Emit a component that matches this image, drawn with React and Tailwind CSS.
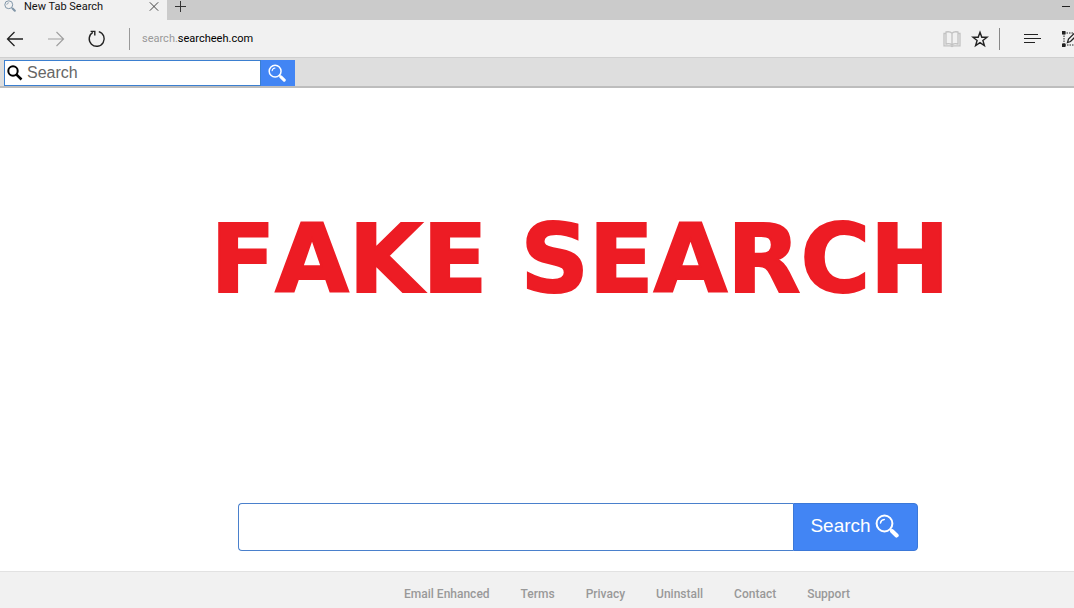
import React, { useState } from 'react';

const footerLinks = ['Email Enhanced', 'Terms', 'Privacy', 'Uninstall', 'Contact', 'Support'];

function Magnifier({ className }) {
    return (
        <svg viewBox="0 0 24 24" fill="none" className={className} aria-hidden="true">
            <circle cx="9.5" cy="9.5" r="7.9" stroke="currentColor" strokeWidth="2" />
            <path d="M5.5 9a4.2 4.2 0 0 1 3.8-3.6" stroke="currentColor" strokeWidth="1.5" strokeLinecap="round" />
            <path d="M14.8 14.8l2 2" stroke="currentColor" strokeWidth="1.8" />
            <path d="M17.2 17.2l4.4 4.2" stroke="currentColor" strokeWidth="4.2" strokeLinecap="round" />
        </svg>
    );
}

function TabStrip() {
    return (
        <div className="flex h-5 bg-[#cbcbcb] text-[#111]">
            <div className="flex w-[167px] shrink-0 items-start bg-[#f1f1f1] pl-1 pr-2">
                <Magnifier className="h-3 w-3 text-[#8196a8]" />
                <span className="flex-1 pl-2 font-['Roboto',sans-serif] text-[11px] leading-[14px]">New Tab Search</span>
                <button type="button" aria-label="Close tab" className="pt-0.5">
                    <svg viewBox="0 0 10 10" className="h-[10px] w-[10px]" stroke="#444" fill="none">
                        <path d="M0.8 0.3l8.4 8.4M9.2 0.3L0.8 8.7" />
                    </svg>
                </button>
            </div>
            <button type="button" aria-label="New tab" className="flex items-start pl-2 pt-px">
                <svg viewBox="0 0 12 12" className="h-3 w-3" stroke="#333" fill="none">
                    <path d="M5.5 0v11M0 5.5h11" />
                </svg>
            </button>
            <button type="button" aria-label="Minimize" className="ml-auto flex items-start pr-1 pt-1.5">
                <span className="block h-px w-2 bg-[#222]" />
            </button>
        </div>
    );
}

function AddressBar() {
    return (
        <div className="flex h-[38px] items-center overflow-hidden border-b border-[#d0d0d0] bg-[#f1f1f1] pl-1.5">
            <button type="button" aria-label="Back">
                <svg viewBox="0 0 18 16" className="h-4 w-[18px]" stroke="#222" strokeWidth="1.3" fill="none">
                    <path d="M17 8H1.5M8.5 1L1.5 8l7 7" />
                </svg>
            </button>
            <button type="button" aria-label="Forward" className="ml-6">
                <svg viewBox="0 0 18 16" className="h-4 w-[18px]" stroke="#a0a0a0" strokeWidth="1.2" fill="none">
                    <path d="M0 8h15.5M8.5 1l7 7-7 7" />
                </svg>
            </button>
            <button type="button" aria-label="Refresh" className="ml-5">
                <svg viewBox="0 0 20 18" className="h-[18px] w-5" stroke="#222" strokeWidth="1.4" fill="none">
                    <path d="M12.8 1.6A7.500 7.500 0 1 1 6.800 2.400" />
                    <path d="M4.600 1.400h4.200v4" />
                </svg>
            </button>
            <span className="ml-[23px] h-[22px] w-px bg-[#999]" />
            <div className="ml-3 flex-1 font-['Roboto',sans-serif] text-[11px] leading-4 text-[#999]">
                search.<span className="text-black">searcheeh.com</span>
            </div>
            <button type="button" aria-label="Reading view">
                <svg viewBox="0 0 18 18" className="h-[18px] w-[18px]" stroke="#c2c2c2" strokeWidth="1.3" fill="none">
                    <path d="M9 3.2C7.5 1.6 5 1.6 3 2v12c2-.5 4.500-.4 6 1 1.500-1.400 4-1.500 6-1V2c-2-.4-4.500-.4-6 1.200zM9 3v12M3 3.500H1v12.300h6.500L9 16.500l1.500-.7H17V3.500h-2" />
                </svg>
            </button>
            <button type="button" aria-label="Favorites" className="ml-2.5">
                <svg viewBox="0 0 18 18" className="h-[18px] w-[18px]" stroke="#222" strokeWidth="1.4" fill="none">
                    <path d="M9 2.200l1.800 5h5.300l-4.200 3.300 1.500 5.100L9 12.600l-4.400 3 1.500-5.100L1.900 7.200h5.300z" />
                </svg>
            </button>
            <span className="ml-2.5 h-[22px] w-px bg-[#888]" />
            <button type="button" aria-label="Hub" className="ml-6">
                <svg viewBox="0 0 18 12" className="h-3 w-[18px]" stroke="#222" strokeWidth="1.2" fill="none">
                    <path d="M0 1.500h14M0 5.500h17M0 9.500h11" />
                </svg>
            </button>
            <button type="button" aria-label="Make a web note" className="-mr-1 ml-5 shrink-0">
                <svg viewBox="0 0 16 16" className="h-4 w-4" fill="none" stroke="#222">
                    <path d="M2 2h12M2 2v12h12" strokeDasharray="1.500 1" />
                    <path d="M0 0h3.500v3.500H0zM0 12.500h3.500V16H0z" fill="#222" stroke="none" />
                    <path d="M5.500 11.500l1-3.500L14 .8l2 2.200-7.500 7.500z" fill="#f1f1f1" strokeWidth="1.300" />
                </svg>
            </button>
        </div>
    );
}

function App() {
    const [toolbarQuery, setToolbarQuery] = useState('');
    const [query, setQuery] = useState('');

    const handleSubmit = (e) => {
        e.preventDefault();
    };

    return (
        <div className="flex min-h-screen flex-col bg-white">
            <TabStrip />
            <AddressBar />

            <div className="flex h-[30px] items-start border-b-2 border-[#bdbdbd] bg-[#dedede] pl-1 pt-0.5 font-['Liberation_Sans',sans-serif]">
                <form onSubmit={handleSubmit} className="flex h-[26px] w-[291px]">
                    <label className="flex min-w-0 flex-1 items-center border border-[#3b7fd0] bg-white pl-0.5">
                        <svg viewBox="0 0 16 16" className="h-4 w-4 shrink-0" stroke="#000" strokeWidth="2" fill="none" aria-hidden="true">
                            <circle cx="6" cy="6" r="4.700" />
                            <path d="M9.300 9.300l5.200 5.200" strokeWidth="2.500" />
                        </svg>
                        <input
                            type="text"
                            aria-label="Toolbar search"
                            placeholder="Search"
                            value={toolbarQuery}
                            onChange={(e) => setToolbarQuery(e.target.value)}
                            className="min-w-0 flex-1 pl-1 text-base leading-5 outline-none placeholder:text-[#666]"
                        />
                    </label>
                    <button type="submit" aria-label="Search toolbar" className="flex w-[34px] items-center justify-center bg-[#4285f4] pr-0.5 text-white">
                        <Magnifier className="h-[18px] w-[18px]" />
                    </button>
                </form>
            </div>

            <main className="flex flex-1 flex-col items-center justify-between pb-5 pl-[82px] pt-[111px] font-['Liberation_Sans',sans-serif]">
                <h1 className="whitespace-nowrap pl-1 text-center font-['DejaVu_Sans',sans-serif] text-[95px] font-bold leading-[120px] text-[#ed1c24] [font-kerning:none] [-webkit-text-stroke:2px_#ed1c24]">
                    FAKE SEARCH
                </h1>
                <form onSubmit={handleSubmit} className="flex h-12 w-full max-w-[680px]">
                    <input
                        type="text"
                        aria-label="Search the web"
                        value={query}
                        onChange={(e) => setQuery(e.target.value)}
                        className="min-w-0 flex-1 rounded-l border border-r-0 border-[#4a80cc] px-3 text-lg outline-none"
                    />
                    <button
                        type="submit"
                        className="flex w-[125px] items-center justify-center gap-1 rounded-r border border-[#3b78d8] bg-[#4285f4] pb-0.5 pr-0.5 text-[19px] leading-6 text-white"
                    >
                        Search
                        <Magnifier className="h-6 w-6" />
                    </button>
                </form>
            </main>

            <footer className="flex h-[37px] items-center justify-center border-t border-[#e2e2e2] bg-[#f1f1f1] pl-[180px] pt-2">
                <nav className="flex gap-[31px] font-['Roboto',sans-serif] text-xs font-medium text-[#999]">
                    {footerLinks.map((link) => (
                        <a key={link} href="#" className="whitespace-nowrap">
                            {link}
                        </a>
                    ))}
                </nav>
            </footer>
        </div>
    );
}

export default App;
